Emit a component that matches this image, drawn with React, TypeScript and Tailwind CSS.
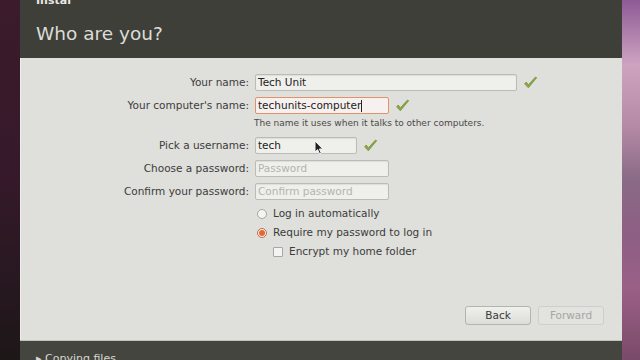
import React from "react";

const Check = () => (
  <svg width="15" height="14" viewBox="0 0 14 13" className="shrink-0">
    <path d="M1.5 7.2 L5 11 L12.8 1.5 L11.6 1 L5 8.2 L3 5.6 Z" fill="#8da64c" stroke="#7d9640" strokeWidth="0.8" strokeLinejoin="round" />
  </svg>
);

const Field = (props: { label: string; value?: string; placeholder?: string; width: string; focus?: boolean; check?: boolean; children?: React.ReactNode }) => (
  <div className="flex items-center h-[23px]">
    <div className="w-[234px] pr-[6px] text-right text-[#3c3c3c]">{props.label}</div>
    <div
      className={
        "relative flex items-center h-[17px] px-[2px] rounded-[2px] border " +
        props.width +
        (props.focus ? " border-[#e0936a] bg-[#f6f1ee]" : " border-[#bcbcb4] bg-[#efefec] shadow-[inset_0_1px_1px_rgba(0,0,0,0.08)]")
      }
    >
      {props.value ? (
        <span className="text-[#222]">{props.value}</span>
      ) : (
        <span className="text-[#b4b4ae]">{props.placeholder}</span>
      )}
      {props.focus && <span className="w-[1px] h-[12px] bg-[#222]" />}
      {props.children}
    </div>
    {props.check && (
      <div className="ml-[6px]">
        <Check />
      </div>
    )}
  </div>
);

export default function App() {
  return (
    <div className="w-[640px] h-[360px] flex overflow-hidden font-['DejaVu_Sans',sans-serif] text-[10.5px]">
      <div className="w-[20px] h-full bg-[linear-gradient(180deg,#3b1b2c_0%,#35192a_50%,#1d1718_100%)]" />
      <div className="flex-1 flex flex-col">
        <div className="h-[58px] bg-[#3f3f39] flex flex-col overflow-hidden pl-[16px]">
          <div className="text-[#e8e8e2] font-bold text-[11px] leading-[11px] mt-[-5px]">Instal</div>
          <div className="text-[#dcdcd6] text-[18.5px] mt-[17px] leading-[22px]">Who are you?</div>
        </div>
        <div className="flex-1 bg-[#dfdfdb] flex flex-col pt-[13px] border-l border-[#eeeeea]">
          <Field label="Your name:" value="Tech Unit" width="w-[262px]" check />
          <Field label="Your computer's name:" value="techunits-computer" width="w-[134px]" focus check />
          <div className="pl-[233px] h-[12px] leading-[12px] text-[9px] text-[#4a4a48]">
            The name it uses when it talks to other computers.
          </div>
          <div className="mt-[5px]">
            <Field label="Pick a username:" value="tech" width="w-[102px]" check>
              <svg width="12" height="16" viewBox="0 0 12 16" className="absolute left-[58px] top-[2px]">
                <path d="M1 1 L1 12 L3.6 9.6 L5.6 14 L7.3 13.2 L5.4 9 L8.8 9 Z" fill="#222" stroke="#f4f4f4" strokeWidth="1" strokeLinejoin="round" />
              </svg>
            </Field>
          </div>
          <Field label="Choose a password:" placeholder="Password" width="w-[134px]" />
          <Field label="Confirm your password:" placeholder="Confirm password" width="w-[134px]" />
          <div className="mt-[1px] pl-[236px] flex flex-col text-[#3c3c3c]">
            <div className="flex items-center h-[19px] gap-[6px]">
              <span className="w-[10px] h-[10px] rounded-full border border-[#a8a8a2] bg-[#f4f4f2]" />
              <span>Log in automatically</span>
            </div>
            <div className="flex items-center h-[19px] gap-[6px]">
              <span className="w-[10px] h-[10px] rounded-full border border-[#c86a40] bg-[#f4f4f2] flex items-center justify-center">
                <span className="w-[6px] h-[6px] rounded-full bg-[#e0683a]" />
              </span>
              <span>Require my password to log in</span>
            </div>
            <div className="flex items-center h-[19px] gap-[6px] pl-[16px]">
              <span className="w-[10px] h-[10px] rounded-[1px] border border-[#a8a8a2] bg-[#f4f4f2]" />
              <span>Encrypt my home folder</span>
            </div>
          </div>
          <div className="flex-1" />
          <div className="flex justify-end gap-[7px] pr-[18px] pb-[15px]">
            <div className="w-[66px] h-[19px] rounded-[3px] border border-[#b4b4ae] bg-[linear-gradient(180deg,#f0f0ec,#dcdcd8)] flex items-center justify-center text-[#3a3a3a]">
              Back
            </div>
            <div className="w-[66px] h-[19px] rounded-[3px] border border-[#cfcfca] bg-[#e2e2de] flex items-center justify-center text-[#a6a6a2]">
              Forward
            </div>
          </div>
        </div>
        <div className="h-[20px] bg-[#45453f] border-t border-[#c2c2bc] overflow-hidden pl-[16px] flex items-start">
          <span className="text-[#d8d8d2] text-[11px] mt-[12px] leading-[12px]">▸ Copying files</span>
        </div>
      </div>
      <div className="w-[18px] h-full bg-[linear-gradient(180deg,#8f5a96_0%,#cda3c0_18%,#b48aa6_35%,#8a6a86_50%,#8d5f84_65%,#9a6086_80%,#7a4a6a_100%)]" />
    </div>
  );
}
